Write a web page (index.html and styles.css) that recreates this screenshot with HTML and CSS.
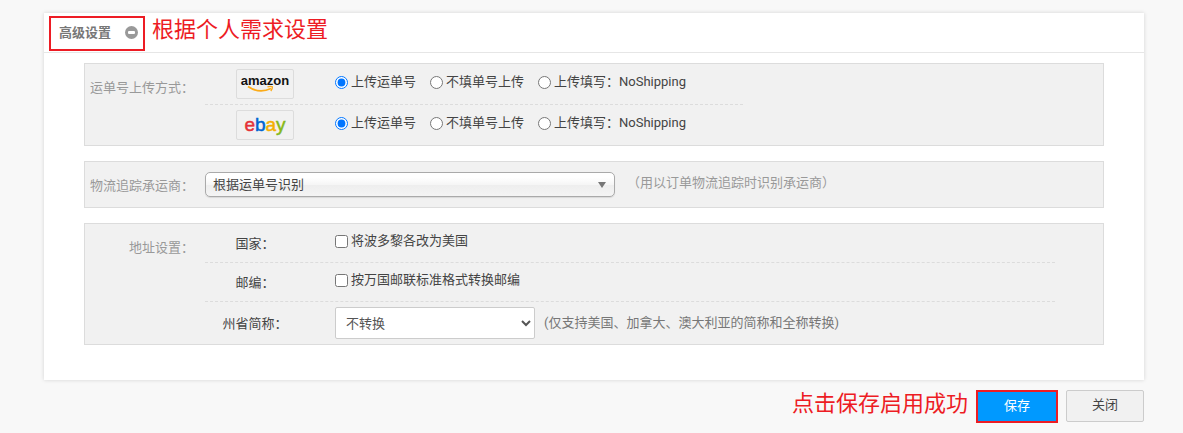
FILE: index.html
```html
<!DOCTYPE html>
<html lang="zh-CN">
<head>
    <meta charset="UTF-8">
    <meta name="viewport" content="width=device-width, initial-scale=1.0">
    <title>高级设置</title>
    <link rel="stylesheet" href="styles.css">
</head>
<body>
    <form class="page">
        <section class="card">
            <header class="card-header">
                <button type="button" class="toggle">
                    高级设置
                    <svg class="toggle-icon" viewBox="0 0 13 13" aria-hidden="true">
                        <circle cx="6.5" cy="6.5" r="6.5" fill="#999"/>
                        <rect x="3" y="5" width="7" height="3" rx="1" fill="#fff"/>
                    </svg>
                </button>
                <span class="note">根据个人需求设置</span>
            </header>

            <div class="card-body">
                <div class="group">
                    <div class="group-label">运单号上传方式：</div>
                    <div class="rows rows-upload">
                        <div class="row">
                            <div class="row-logo">
                                <span class="logo">
                                    <svg width="56" height="28" viewBox="0 0 56 28" role="img" aria-label="amazon">
                                        <text class="amazon-text" x="28" y="15" text-anchor="middle">amazon</text>
                                        <path d="M11 16.5 Q22 24 34 18.5" fill="none" stroke="#fbab18" stroke-width="1.8"/>
                                        <path d="M30.5 16.8 Q34 15.8 35.4 16.8 Q35.6 18.8 33.8 21" fill="none" stroke="#fbab18" stroke-width="1.3"/>
                                    </svg>
                                </span>
                            </div>
                            <div class="options">
                                <label><input type="radio" name="amazon" checked>上传运单号</label>
                                <label><input type="radio" name="amazon">不填单号上传</label>
                                <label><input type="radio" name="amazon">上传填写：NoShipping</label>
                            </div>
                        </div>
                        <div class="row">
                            <div class="row-logo">
                                <span class="logo">
                                    <svg width="56" height="28" viewBox="0 0 56 28" role="img" aria-label="ebay">
                                        <text class="ebay-text" x="28" y="20" text-anchor="middle"><tspan class="ebay-e">e</tspan><tspan class="ebay-b">b</tspan><tspan class="ebay-a">a</tspan><tspan class="ebay-y">y</tspan></text>
                                    </svg>
                                </span>
                            </div>
                            <div class="options">
                                <label><input type="radio" name="ebay" checked>上传运单号</label>
                                <label><input type="radio" name="ebay">不填单号上传</label>
                                <label><input type="radio" name="ebay">上传填写：NoShipping</label>
                            </div>
                        </div>
                    </div>
                </div>

                <div class="group group-carrier">
                    <label class="group-label" for="carrier">物流追踪承运商：</label>
                    <div class="carrier">
                        <span class="carrier-select">
                            <select id="carrier">
                                <option>根据运单号识别</option>
                            </select>
                        </span>
                        <span class="carrier-hint">（用以订单物流追踪时识别承运商）</span>
                    </div>
                </div>

                <div class="group">
                    <div class="group-label">地址设置：</div>
                    <div class="rows rows-address">
                        <div class="row">
                            <div class="row-name">国家：</div>
                            <div class="options">
                                <label><input type="checkbox">将波多黎各改为美国</label>
                            </div>
                        </div>
                        <div class="row">
                            <div class="row-name">邮编：</div>
                            <div class="options">
                                <label><input type="checkbox">按万国邮联标准格式转换邮编</label>
                            </div>
                        </div>
                        <div class="row row-state">
                            <label class="row-name" for="state">州省简称：</label>
                            <div class="state">
                                <select id="state">
                                    <option>不转换</option>
                                </select>
                                <span class="state-hint">(仅支持美国、加拿大、澳大利亚的简称和全称转换)</span>
                            </div>
                        </div>
                    </div>
                </div>
            </div>
        </section>

        <footer class="actions">
            <span class="note">点击保存启用成功</span>
            <button type="submit" class="btn btn-primary">保存</button>
            <button type="button" class="btn">关闭</button>
        </footer>
    </form>
</body>
</html>
```

FILE: styles.css
```css
* {
    box-sizing: border-box;
}
body {
    margin: 0;
    background: #f8f8f8;
    color: #444;
    font: 13px/20px Roboto, "Noto Sans CJK SC", sans-serif;
}
button,
select {
    font: inherit;
}
.page {
    padding: 13px 39px 10px 44px;
}

/* Card */
.card {
    background: #fff;
    box-shadow: 0 0 4px rgba(0, 0, 0, 0.15);
}
.card-header {
    display: flex;
    align-items: flex-start;
    gap: 7px;
    height: 40px;
    padding: 3px 5px 0;
    border-bottom: 1px solid #e6e6e6;
}
.toggle {
    display: flex;
    align-items: center;
    gap: 14px;
    height: 35px;
    padding: 0 5px 2px 8px;
    border: 2px solid #ed1c24;
    background: none;
    color: #777;
    font-weight: bold;
    cursor: pointer;
}
.toggle-icon {
    width: 13px;
    height: 13px;
}
.note {
    color: #ed1c24;
    font-size: 22px;
    line-height: 28px;
}
.card-body {
    display: flex;
    flex-direction: column;
    gap: 15px;
    padding: 10px 40px 35px;
}

/* Setting groups */
.group {
    display: flex;
    background: #f1f1f1;
    border: 1px solid #dcdcdc;
}
.group-label {
    flex: none;
    width: 120px;
    padding: 14px 11px 0 0;
    color: #999;
    text-align: right;
}
.rows-upload {
    width: 538px;
}
.rows-address {
    width: 850px;
}
.row {
    display: flex;
    align-items: center;
    height: 38px;
}
.rows-upload .row {
    height: 40px;
}
.row + .row {
    height: 39px;
    border-top: 1px dashed #dcdcdc;
}
.rows-upload .row + .row {
    height: 41px;
}
.rows-address .row-state {
    height: 43px;
}
.row-logo {
    display: flex;
    justify-content: center;
    width: 130px;
    padding-right: 10px;
}
.logo {
    display: flex;
    border: 1px solid #dcdcdc;
    border-radius: 2px;
}
.amazon-text {
    font: bold 13px "Liberation Sans", sans-serif;
    fill: #111;
}
.ebay-text {
    font: 19px "Liberation Sans", sans-serif;
    stroke-width: 0.5;
}
.ebay-e {
    fill: #e53238;
    stroke: #e53238;
}
.ebay-b {
    fill: #0064d2;
    stroke: #0064d2;
}
.ebay-a {
    fill: #f5af02;
    stroke: #f5af02;
}
.ebay-y {
    fill: #86b817;
    stroke: #86b817;
}
.row-name {
    width: 130px;
    padding: 2px 30px 0 0;
    text-align: center;
}
.options {
    display: flex;
    gap: 14px;
    padding-bottom: 4px;
}
.options label {
    display: flex;
    align-items: center;
    gap: 3px;
}
.options input {
    width: 13px;
    height: 13px;
    margin: 0;
}

/* Carrier */
.group-carrier {
    height: 47px;
}
.carrier {
    display: flex;
    flex: 1;
    align-items: center;
    gap: 12px;
}
.carrier-select {
    position: relative;
    width: 410px;
}
.carrier-select select {
    display: block;
    width: 100%;
    height: 25px;
    padding: 0 7px;
    appearance: none;
    border: 1px solid #aaa;
    border-radius: 5px;
    background: linear-gradient(#fff 20%, #f6f6f6 50%, #eee 52%, #f4f4f4 100%);
    box-shadow: 0 1px 1px rgba(0, 0, 0, 0.1);
    color: #444;
}
.carrier-select::after {
    content: "";
    position: absolute;
    top: 10px;
    right: 9px;
    border: 4px solid transparent;
    border-top: 6px solid #777;
    border-bottom: 0;
    pointer-events: none;
}
.carrier-hint {
    padding-bottom: 4px;
    color: #999;
}

/* Address */
.state {
    display: flex;
    align-items: center;
    gap: 9px;
}
.state select {
    width: 200px;
    height: 32px;
    padding: 0 6px;
    border: 1px solid #ccc;
    border-radius: 2px;
    background-color: #fff;
    color: #555;
}
.state-hint {
    color: #777;
}

/* Footer */
.actions {
    display: flex;
    justify-content: flex-end;
    gap: 8px;
    padding-top: 10px;
}
.btn {
    width: 78px;
    height: 32px;
    padding: 0 0 2px;
    border: 1px solid #ccc;
    border-radius: 2px;
    background: #f1f1f1;
    color: #444;
    cursor: pointer;
}
.btn-primary {
    width: 82px;
    height: 33px;
    border: 2px solid #ed1c24;
    border-radius: 0;
    background: #09f;
    color: #fff;
}
```
